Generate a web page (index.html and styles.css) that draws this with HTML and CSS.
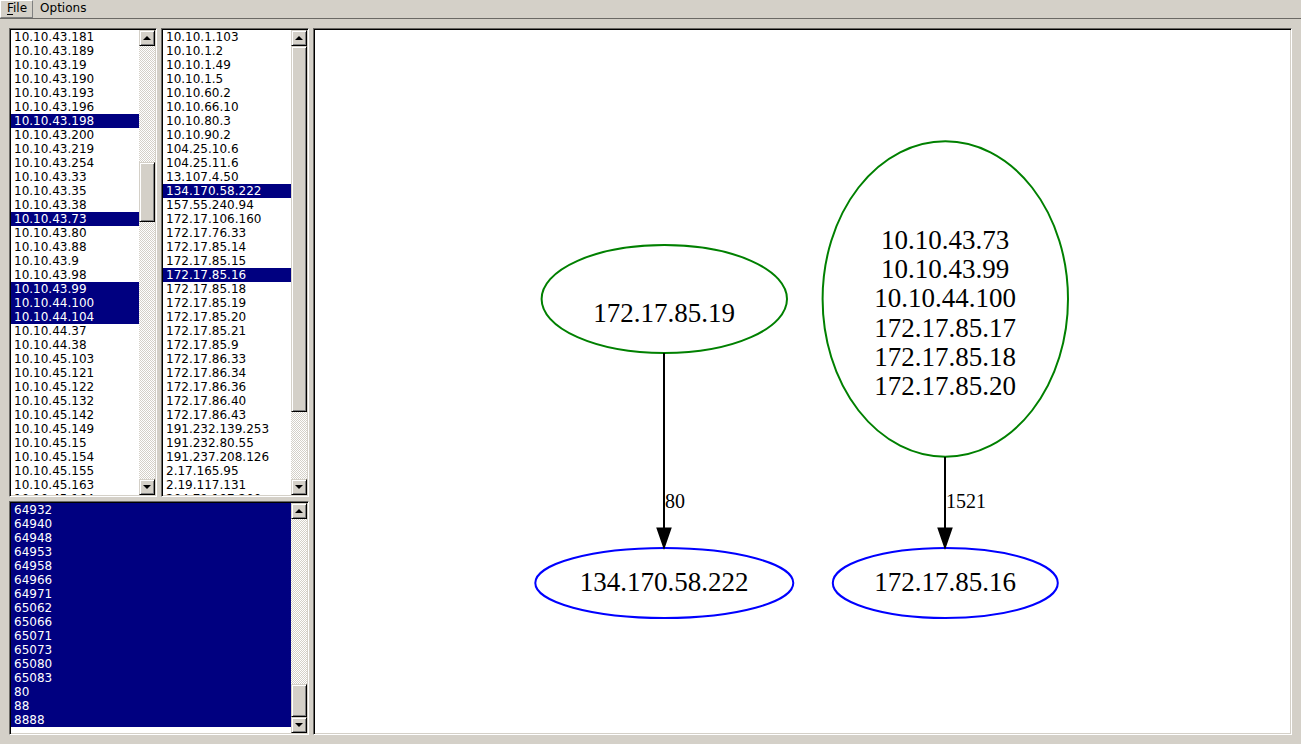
FILE: index.html
```html
<!DOCTYPE html>
<html lang="en">
<head>
<meta charset="utf-8">
<title>Connections</title>
<link rel="stylesheet" href="styles.css">
</head>
<body>
<nav class="menubar">
  <button class="menu menu-active" type="button"><u>F</u>ile</button>
  <button class="menu" type="button">Options</button>
</nav>
<main class="workspace">
  <div class="lists">
    <section class="sunken listbox">
      <div class="viewport">
      <select class="list" multiple size="34" aria-label="Source addresses">
        <option>10.10.43.181</option><option>10.10.43.189</option><option>10.10.43.19</option><option>10.10.43.190</option><option>10.10.43.193</option><option>10.10.43.196</option><option selected>10.10.43.198</option><option>10.10.43.200</option><option>10.10.43.219</option><option>10.10.43.254</option><option>10.10.43.33</option><option>10.10.43.35</option><option>10.10.43.38</option><option selected>10.10.43.73</option><option>10.10.43.80</option><option>10.10.43.88</option><option>10.10.43.9</option><option>10.10.43.98</option><option selected>10.10.43.99</option><option selected>10.10.44.100</option><option selected>10.10.44.104</option><option>10.10.44.37</option><option>10.10.44.38</option><option>10.10.45.103</option><option>10.10.45.121</option><option>10.10.45.122</option><option>10.10.45.132</option><option>10.10.45.142</option><option>10.10.45.149</option><option>10.10.45.15</option><option>10.10.45.154</option><option>10.10.45.155</option><option>10.10.45.163</option><option>10.10.45.164</option>
      </select>
      </div>
      <div class="scrollbar">
        <button class="raised arrow" type="button" aria-label="Scroll up"><svg width="8" height="4" viewBox="0 0 8 4"><path d="M0 4 4 0l4 4z"/></svg></button>
        <div class="trough" style="grid-template-rows: 116fr 60fr 257fr"><div class="raised thumb"></div></div>
        <button class="raised arrow" type="button" aria-label="Scroll down"><svg width="8" height="4" viewBox="0 0 8 4"><path d="M0 0h8L4 4z"/></svg></button>
      </div>
    </section>
    <section class="sunken listbox">
      <div class="viewport">
      <select class="list" multiple size="34" aria-label="Destination addresses">
        <option>10.10.1.103</option><option>10.10.1.2</option><option>10.10.1.49</option><option>10.10.1.5</option><option>10.10.60.2</option><option>10.10.66.10</option><option>10.10.80.3</option><option>10.10.90.2</option><option>104.25.10.6</option><option>104.25.11.6</option><option>13.107.4.50</option><option selected>134.170.58.222</option><option>157.55.240.94</option><option>172.17.106.160</option><option>172.17.76.33</option><option>172.17.85.14</option><option>172.17.85.15</option><option selected>172.17.85.16</option><option>172.17.85.18</option><option>172.17.85.19</option><option>172.17.85.20</option><option>172.17.85.21</option><option>172.17.85.9</option><option>172.17.86.33</option><option>172.17.86.34</option><option>172.17.86.36</option><option>172.17.86.40</option><option>172.17.86.43</option><option>191.232.139.253</option><option>191.232.80.55</option><option>191.237.208.126</option><option>2.17.165.95</option><option>2.19.117.131</option><option>204.79.197.200</option>
      </select>
      </div>
      <div class="scrollbar">
        <button class="raised arrow" type="button" aria-label="Scroll up"><svg width="8" height="4" viewBox="0 0 8 4"><path d="M0 4 4 0l4 4z"/></svg></button>
        <div class="trough" style="grid-template-rows: 0fr 366fr 67fr"><div class="raised thumb"></div></div>
        <button class="raised arrow" type="button" aria-label="Scroll down"><svg width="8" height="4" viewBox="0 0 8 4"><path d="M0 0h8L4 4z"/></svg></button>
      </div>
    </section>
    <section class="sunken listbox ports">
      <div class="viewport">
      <select class="list" multiple size="16" aria-label="Ports">
        <option selected>64932</option><option selected>64940</option><option selected>64948</option><option selected>64953</option><option selected>64958</option><option selected>64966</option><option selected>64971</option><option selected>65062</option><option selected>65066</option><option selected>65071</option><option selected>65073</option><option selected>65080</option><option selected>65083</option><option selected>80</option><option selected>88</option><option selected>8888</option>
      </select>
      </div>
      <div class="scrollbar">
        <button class="raised arrow" type="button" aria-label="Scroll up"><svg width="8" height="4" viewBox="0 0 8 4"><path d="M0 4 4 0l4 4z"/></svg></button>
        <div class="trough" style="grid-template-rows: 165fr 33fr 0fr"><div class="raised thumb"></div></div>
        <button class="raised arrow" type="button" aria-label="Scroll down"><svg width="8" height="4" viewBox="0 0 8 4"><path d="M0 0h8L4 4z"/></svg></button>
      </div>
    </section>
  </div>
  <section class="sunken canvas">
    <svg class="graph" viewBox="0 0 975 703" role="img" aria-label="Connection graph">
      <g class="source">
        <ellipse cx="349.3" cy="269" rx="122.7" ry="54"/>
        <ellipse cx="630.3" cy="269" rx="122.7" ry="157.7"/>
      </g>
      <g class="target">
        <ellipse cx="349.3" cy="553" rx="129" ry="35"/>
        <ellipse cx="630.3" cy="553" rx="112.5" ry="35"/>
      </g>
      <g class="edge">
        <path d="M349 323v176M630 427v72"/>
        <path class="head" d="M341.2 497.5h15.6L349 520zM622.2 497.5h15.6L630 520z"/>
      </g>
      <g class="node-text">
        <text x="349" y="292">172.17.85.19</text>
        <text x="630" y="219">10.10.43.73</text>
        <text x="630" y="248">10.10.43.99</text>
        <text x="630" y="277">10.10.44.100</text>
        <text x="630" y="307">172.17.85.17</text>
        <text x="630" y="336">172.17.85.18</text>
        <text x="630" y="365">172.17.85.20</text>
        <text x="349" y="561">134.170.58.222</text>
        <text x="630" y="561">172.17.85.16</text>
      </g>
      <g class="edge-text">
        <text x="360" y="478">80</text>
        <text x="651" y="478">1521</text>
      </g>
    </svg>
  </section>
</main>
</body>
</html>
```

FILE: styles.css
```css
* {
  box-sizing: border-box;
}

body {
  margin: 0;
  height: 100vh;
  display: flex;
  flex-direction: column;
  background: #d4d0c8;
  color: #000;
  font: 12px/14px "DejaVu Sans", sans-serif;
}

button {
  margin: 0;
  padding: 0;
  background: #d4d0c8;
  color: inherit;
  font: inherit;
}

.menubar {
  display: flex;
  height: 19px;
  flex: none;
  border-bottom: 1px solid #6b6965;
}

.menu {
  padding: 0 5px 2px 6px;
  border: 1px solid transparent;
}

.menu-active {
  border-color: #fff #808080 #808080 #fff;
}

.menu u {
  text-underline-offset: 2px;
}

.workspace {
  flex: 1;
  min-height: 0;
  display: flex;
  gap: 4px;
  padding: 9px;
}

.lists {
  flex: none;
  width: 300px;
  display: grid;
  grid-template-columns: 1fr 1fr;
  grid-template-rows: minmax(0, 469fr) minmax(0, 234fr);
  gap: 4px;
}

.ports {
  grid-column: 1 / -1;
}

/* Two-tone inset bevel: outer edge from the border, inner edge from the shadow. */
.sunken {
  border: 1px solid;
  border-color: #6b6965 #fff #fff #6b6965;
  box-shadow: inset 1px 1px #000, inset -1px -1px #d4d0c8;
  padding: 1px;
}

.listbox {
  display: flex;
  min-width: 0;
  min-height: 0;
}

.viewport {
  flex: 1;
  min-width: 0;
  overflow: hidden;
  background: #fff;
}

.list {
  display: block;
  width: 100%;
  margin: 0;
  padding: 0;
  border: 0;
  border-radius: 0;
  outline: 0;
  overflow: hidden;
  background: #fff;
  color: #000;
  font: inherit;
}

.list option {
  display: block;
  height: 14px;
  min-height: 0;
  padding: 0 3px;
  font: inherit;
}

.list option:checked {
  background: linear-gradient(#000080, #000080);
  color: #fff;
  -webkit-text-fill-color: #fff;
}

.scrollbar {
  flex: none;
  width: 16px;
  display: flex;
  flex-direction: column;
}

.raised {
  border: 1px solid;
  border-color: #d4d0c8 #000 #000 #d4d0c8;
  box-shadow: inset 1px 1px #fff, inset -1px -1px #808080;
  background: #d4d0c8;
}

.arrow {
  flex: none;
  height: 16px;
  display: flex;
  align-items: center;
  justify-content: center;
}

.trough {
  flex: 1;
  display: grid;
  background: conic-gradient(#d4d0c8 25%, #fff 0 50%, #d4d0c8 0 75%, #fff 0) 0 0 / 2px 2px;
}

.thumb {
  grid-row: 2;
}

.canvas {
  flex: 1;
  min-width: 0;
  background: #fff;
}

.graph {
  display: block;
  width: 100%;
  height: 100%;
}

.source,
.target {
  fill: none;
  stroke: #008000;
  stroke-width: 2;
}

.target {
  stroke: #0000ff;
}

.edge {
  stroke: #000;
  stroke-width: 2;
}

.head {
  stroke: none;
}

.node-text,
.edge-text {
  font-family: "Liberation Serif", serif;
  font-size: 27px;
  text-anchor: middle;
}

.edge-text {
  font-size: 20px;
}
```
